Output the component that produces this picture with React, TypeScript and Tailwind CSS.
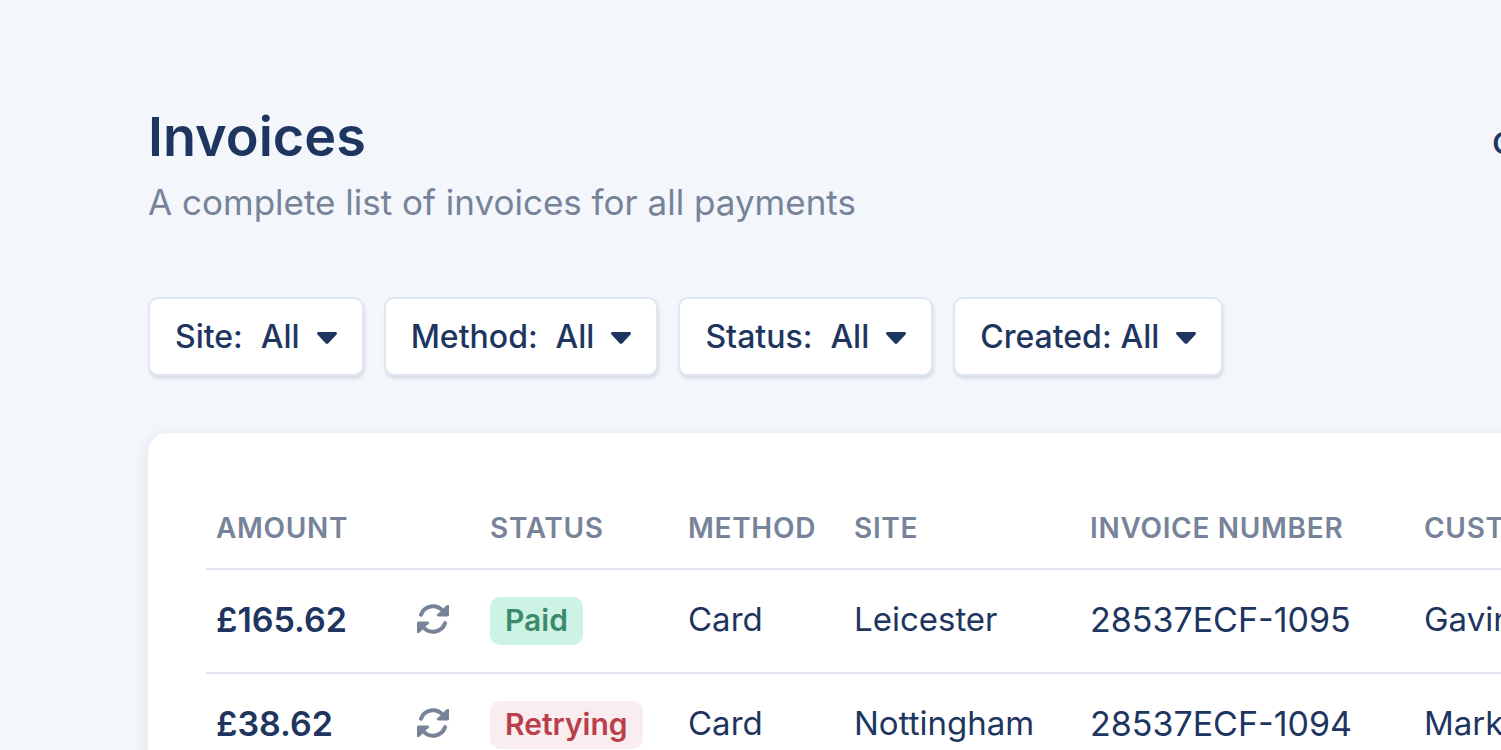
import React from 'react';

type Invoice = {
  amount: string;
  status: 'Paid' | 'Retrying';
  method: string;
  site: string;
  number: string;
  customer: string;
};

const filters = [
  { label: 'Site:', value: 'All', gap: 'gap-[18px]' },
  { label: 'Method:', value: 'All', gap: 'gap-[18px]' },
  { label: 'Status:', value: 'All', gap: 'gap-[18px]' },
  { label: 'Created:', value: 'All', gap: 'gap-[9px]' },
];

const invoices: Invoice[] = [
  { amount: '£165.62', status: 'Paid', method: 'Card', site: 'Leicester', number: '28537ECF-1095', customer: 'Gavin' },
  { amount: '£38.62', status: 'Retrying', method: 'Card', site: 'Nottingham', number: '28537ECF-1094', customer: 'Mark' },
];

const badgeStyles = {
  Paid: 'bg-[#cdf3e5] text-[#3b8a6b]',
  Retrying: 'bg-[#f9edef] text-[#b83f4b]',
};

function CaretIcon() {
  return (
    <svg viewBox="0 0 20 12" className="mt-0.5 h-3 w-5 fill-current" aria-hidden="true">
      <path d="M1.5 0H18.5C19.8 0 20.4 1.5 19.5 2.4L11.4 11.2C10.6 12 9.4 12 8.6 11.2L0.5 2.4C-0.4 1.5 0.2 0 1.5 0Z" />
    </svg>
  );
}

function RecurringIcon() {
  return (
    <svg viewBox="0 0 32 30" className="block h-[30px] w-8" role="img" aria-label="Recurring payment">
      <g fill="none" stroke="#778399" strokeWidth="4" strokeLinecap="round">
        <path d="M4 10.8A12.8 12.8 0 0 1 25.5 6.5" />
        <path d="M28 19.2A12.8 12.8 0 0 1 6.5 23.5" />
      </g>
      <g fill="#778399">
        <path d="M32 2V11.3Q32 12.6 30.7 12.6H21.3C19.9 12.6 19.4 11 20.4 10L23.6 7.4L29.3 1.6C30.4.5 32 .8 32 2Z" />
        <path d="M0 28V18.7Q0 17.4 1.3 17.4H10.7C12.1 17.4 12.6 19 11.6 20L8.4 22.6L2.7 28.4C1.6 29.5 0 29.2 0 28Z" />
      </g>
    </svg>
  );
}

function FilterButton({ label, value, gap }: { label: string; value: string; gap: string }) {
  return (
    <button
      type="button"
      aria-haspopup="listbox"
      className="flex h-[79px] items-center gap-[17px] rounded-[10px] border-2 border-[#e0e7ef] bg-white px-[25px] text-[32px] font-medium shadow-[1px_3px_3px_rgba(30,50,90,0.12)]"
    >
      <span className={`flex ${gap}`}>
        <span>{label}</span>
        <span>{value}</span>
      </span>
      <CaretIcon />
    </button>
  );
}

export default function App() {
  return (
    <div className="min-h-screen overflow-hidden bg-[#f3f6fb] font-['Inter',sans-serif] text-[#1e365f]">
      <main className="w-max min-w-full px-[148px] pt-[103px]">
        <header className="flex items-start justify-between">
          <div>
            <h1 className="text-[54px] leading-[68px] font-semibold">Invoices</h1>
            <p className="mt-1.5 text-[35px] leading-[50px] text-[#778399]">A complete list of invoices for all payments</p>
          </div>
          <a href="#create" className="mt-5 mr-[143px] text-[30px] leading-10 font-semibold">
            Create
          </a>
        </header>

        <div className="mt-[70px] flex gap-5">
          {filters.map((f) => (
            <FilterButton key={f.label} {...f} />
          ))}
        </div>

        <section className="mt-[57px] rounded-[20px] bg-white px-[58px] pt-[54px] pb-12 shadow-[0_4px_16px_rgba(30,50,90,0.10)]">
          <table className="table-fixed border-collapse text-left">
            <colgroup>
              <col className="w-[201px]" />
              <col className="w-[73px]" />
              <col className="w-[198px]" />
              <col className="w-[166px]" />
              <col className="w-[236px]" />
              <col className="w-[334px]" />
              <col className="w-[260px]" />
            </colgroup>
            <thead>
              <tr className="h-[82px] border-b-2 border-[#dfe6ef] text-[28px] whitespace-nowrap text-[#778399] uppercase [&>th]:px-[10px] [&>th]:font-semibold [&>th]:tracking-wide">
                <th scope="col">Amount</th>
                <td />
                <th scope="col">Status</th>
                <th scope="col">Method</th>
                <th scope="col">Site</th>
                <th scope="col">Invoice number</th>
                <th scope="col">Customer</th>
              </tr>
            </thead>
            <tbody>
              {invoices.map((inv) => (
                <tr key={inv.number} className="h-[104px] border-b-2 border-[#dfe6ef] text-[33px] [&>td]:px-[10px]">
                  <td className="pb-1 text-[34px] font-semibold">{inv.amount}</td>
                  <td className="pb-1">
                    <RecurringIcon />
                  </td>
                  <td className="pb-1">
                    <span
                      className={`inline-flex h-12 items-center rounded-[10px] px-[15px] align-middle text-[30px] font-semibold ${badgeStyles[inv.status]}`}
                    >
                      {inv.status}
                    </span>
                  </td>
                  <td className="pb-0.5">{inv.method}</td>
                  <td className="pb-0.5">{inv.site}</td>
                  <td className="pb-1 text-[34px]">{inv.number}</td>
                  <td className="pb-0.5">{inv.customer}</td>
                </tr>
              ))}
            </tbody>
          </table>
        </section>
      </main>
    </div>
  );
}
